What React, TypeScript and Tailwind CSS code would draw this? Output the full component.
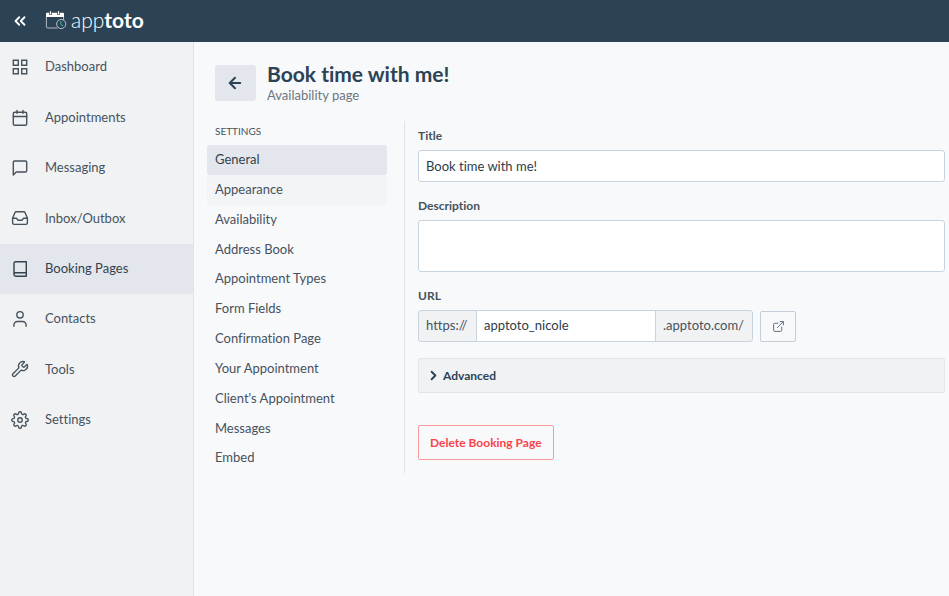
import { useState, type ReactNode } from "react";
import { Wrench, ExternalLink, ChevronRight, ChevronsLeft, ArrowLeft } from "lucide-react";
import { FiSettings } from "react-icons/fi";
import clsx from "clsx";

function Icon({ children }: { children: ReactNode }) {
  return (
    <svg
      viewBox="0 0 20 20"
      className="size-5"
      fill="none"
      stroke="currentColor"
      strokeWidth="1.4"
      strokeLinecap="round"
      strokeLinejoin="round"
      aria-hidden="true"
    >
      {children}
    </svg>
  );
}

const navItems = [
  {
    label: "Dashboard",
    icon: (
      <Icon>
        <path strokeLinejoin="miter" d="M3.3 3.3h5v5h-5zM11.7 3.3h5v5h-5zM3.3 11.7h5v5h-5zM11.7 11.7h5v5h-5z" />
      </Icon>
    ),
  },
  {
    label: "Appointments",
    icon: (
      <Icon>
        <rect x="3.3" y="4.3" width="13.4" height="13" rx="1.3" />
        <path d="M3.3 8.5h13.4M7 2.5v2.8M13 2.5v2.8" />
      </Icon>
    ),
  },
  {
    label: "Messaging",
    icon: (
      <Icon>
        <path d="M3.3 17V4.2a1.2 1.2 0 0 1 1.2-1.2h11a1.2 1.2 0 0 1 1.2 1.2v8.6a1.2 1.2 0 0 1-1.2 1.2H6.2z" />
      </Icon>
    ),
  },
  {
    label: "Inbox/Outbox",
    icon: (
      <Icon>
        <path d="M2.6 10.2 4.9 4.7a1.6 1.6 0 0 1 1.5-1h7.2a1.6 1.6 0 0 1 1.5 1l2.3 5.5v4.6a1.6 1.6 0 0 1-1.6 1.6H4.2a1.6 1.6 0 0 1-1.6-1.6z" />
        <path d="M2.6 10.2h3.6c.9 0 1 2 2.4 2h2.8c1.4 0 1.5-2 2.4-2h3.6" />
      </Icon>
    ),
  },
  {
    label: "Booking Pages",
    icon: (
      <Icon>
        <path d="M4 15.4V4.2a1.5 1.5 0 0 1 1.5-1.5h10.8v14.6H5.7A1.8 1.8 0 0 1 4 15.5a1.8 1.8 0 0 1 1.7-1.7h10.6" />
      </Icon>
    ),
  },
  {
    label: "Contacts",
    icon: (
      <Icon>
        <circle cx="10" cy="5.8" r="3.2" />
        <path d="M3.9 17.3v-1.2a3.6 3.6 0 0 1 3.6-3.6h5a3.6 3.6 0 0 1 3.6 3.6v1.2" />
      </Icon>
    ),
  },
  { label: "Tools", icon: <Wrench className="size-[18px]" strokeWidth={1.8} /> },
  { label: "Settings", icon: <FiSettings className="size-[18px]" strokeWidth={1.8} /> },
];

const settings = [
  "General",
  "Appearance",
  "Availability",
  "Address Book",
  "Appointment Types",
  "Form Fields",
  "Confirmation Page",
  "Your Appointment",
  "Client's Appointment",
  "Messages",
  "Embed",
];

function Logo() {
  return (
    <a href="#" className="flex items-center gap-1 text-white">
      <svg viewBox="0 0 22 20" className="h-5 w-[22px]" fill="none" aria-hidden="true">
        <path d="M1 7V3.8A1 1 0 0 1 2 2.8h16a1 1 0 0 1 1 1V7z" fill="#fff" />
        <path d="M5.5 1v4M13.5 1v4" stroke="#2b4355" strokeWidth="2.6" />
        <path d="M5.5 1.6v2.4M13.5 1.6v2.4" stroke="#fff" strokeWidth="1.3" strokeLinecap="round" />
        <path d="M1.4 7v9.8a1.2 1.2 0 0 0 1.2 1.2h10M18.6 7v3" stroke="#d3dae0" strokeWidth=".8" />
        <circle cx="16.2" cy="14" r="4.6" fill="#2b4355" stroke="#d3dae0" strokeWidth=".8" />
        <path d="M15.8 11v3.4l2.4 1.6" stroke="#41b59a" strokeWidth="1" />
      </svg>
      <span className="text-[21px] leading-5 font-light">
        app<span className="font-bold">toto</span>
      </span>
    </a>
  );
}

export default function App() {
  const [title, setTitle] = useState("Book time with me!");
  const [description, setDescription] = useState("");
  const [slug, setSlug] = useState("apptoto_nicole");

  return (
    <div className="flex min-h-screen flex-col bg-[#f8f9fb] font-['Lato',sans-serif] text-[13px] text-[#46525c] [font-variant-ligatures:none]">
      <header className="flex h-[42px] items-center gap-4 bg-[#2b4355] px-[11px] pb-[2px]">
        <button type="button" aria-label="Collapse menu" className="pt-[2px] text-white">
          <ChevronsLeft className="size-[18px]" strokeWidth={2.4} />
        </button>
        <Logo />
      </header>

      <div className="flex flex-1">
        <aside className="w-[194px] shrink-0 border-r border-[#e0e4e9] bg-[#f1f2f4]">
          <nav className="grid h-[403px] auto-rows-fr">
            {navItems.map((item) => (
              <a
                key={item.label}
                href="#"
                className={clsx(
                  "flex items-center gap-[15px] px-[10px]",
                  item.label === "Booking Pages" && "bg-[#e3e6ec] text-[#33424e]"
                )}
              >
                <span className="flex w-5 justify-center">{item.icon}</span>
                {item.label}
              </a>
            ))}
          </nav>
        </aside>

        <main className="flex-1 pt-5 pr-1 pl-[13px]">
          <div className="flex items-center gap-[11px] pl-2">
            <button
              type="button"
              aria-label="Back"
              className="flex h-9 w-[41px] items-center justify-center rounded-[3px] bg-[#e3e6ec] pr-px text-[#2b4355]"
            >
              <ArrowLeft className="size-[18px]" strokeWidth={2.6} />
            </button>
            <div>
              <h1 className="text-[21px] leading-6 font-bold text-[#2b4355]">{title}</h1>
              <p className="leading-[18px] text-[#6b7781]">Availability page</p>
            </div>
          </div>

          <div className="mt-[17px] flex items-start">
            <section className="w-[198px] shrink-0 border-r border-[#e0e4e9] pr-[17px]">
              <h2 className="px-2 pt-px pb-[5px] text-[10px] leading-[18px] uppercase">Settings</h2>
              <nav className="grid h-[328px] auto-rows-fr">
                {settings.map((item) => (
                  <a
                    key={item}
                    href="#"
                    className={clsx(
                      "flex items-center rounded-[3px] px-2",
                      item === "General" && "bg-[#e3e6ec] text-[#33424e]",
                      item === "Appearance" && "bg-[#f2f4f6]"
                    )}
                  >
                    {item}
                  </a>
                ))}
              </nav>
            </section>

            <form className="min-w-0 flex-1 pt-[6px] pl-[13px]" onSubmit={(e) => e.preventDefault()}>
              <label htmlFor="title" className="block pb-[5px] text-xs leading-[18px] font-bold">
                Title
              </label>
              <input
                id="title"
                value={title}
                onChange={(e) => setTitle(e.target.value)}
                className="block h-8 w-full rounded-[3px] border border-[#c8d3e2] bg-white px-[7px] text-[#2f3d48]"
              />

              <label htmlFor="description" className="mt-[15px] block pb-[5px] text-xs leading-[18px] font-bold">
                Description
              </label>
              <textarea
                id="description"
                value={description}
                onChange={(e) => setDescription(e.target.value)}
                className="block h-[52px] w-full resize-none rounded-[3px] border border-[#c8d3e2] bg-white px-[7px] py-1"
              />

              <label htmlFor="url" className="mt-[15px] block pb-[5px] text-xs leading-[18px] font-bold">
                URL
              </label>
              <div className="flex items-end gap-[7px]">
                <div className="flex h-8 w-[335px] overflow-hidden rounded-[3px] border border-[#c8d3e2] bg-[#f1f2f4]">
                  <span className="flex w-[57px] items-center pl-[7px]">https://</span>
                  <input
                    id="url"
                    value={slug}
                    onChange={(e) => setSlug(e.target.value)}
                    className="min-w-0 flex-1 border-x border-[#c8d3e2] bg-white px-[7px] text-[#2f3d48]"
                  />
                  <span className="flex w-[96px] items-center pl-[7px]">.apptoto.com/</span>
                </div>
                <button
                  type="button"
                  aria-label="Open page"
                  className="flex h-[31px] w-9 items-center justify-center rounded-xs border border-[#c5cfd9] text-[#5f6f7b]"
                >
                  <ExternalLink className="size-[13px]" strokeWidth={1.8} />
                </button>
              </div>

              <button
                type="button"
                className="mt-4 flex h-[35px] w-full items-center gap-[2px] rounded-xs border border-[#e2e5e9] bg-[#f1f2f4] px-[7px] text-xs font-bold text-[#2b4355]"
              >
                <ChevronRight className="size-[15px]" strokeWidth={3} />
                Advanced
              </button>

              <button
                type="button"
                className="mt-8 h-[35px] rounded-xs border border-[#fb9a9e] px-[11px] text-xs font-bold text-[#f94449]"
              >
                Delete Booking Page
              </button>
            </form>
          </div>
        </main>
      </div>
    </div>
  );
}
